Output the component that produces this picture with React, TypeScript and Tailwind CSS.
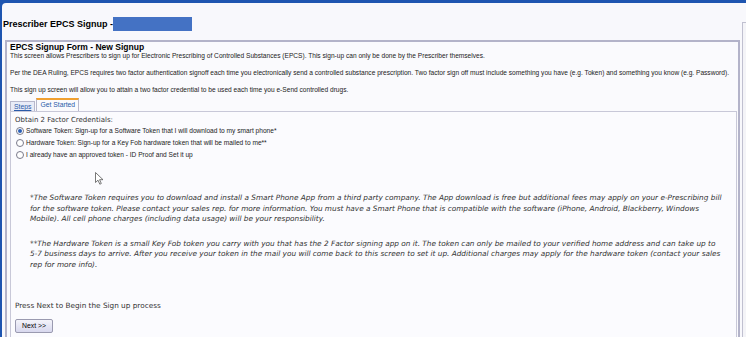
import React from "react";

const introLines: string[] = [
  "This screen allows Prescribers to sign up for Electronic Prescribing of Controlled Substances (EPCS). This sign-up can only be done by the Prescriber themselves.",
  "Per the DEA Ruling, EPCS requires two factor authentication signoff each time you electronically send a controlled substance prescription. Two factor sign off must include something you have (e.g. Token) and something you know (e.g. Password).",
  "This sign up screen will allow you to attain a two factor credential to be used each time you e-Send controlled drugs.",
];

const options: string[] = [
  "Software Token: Sign-up for a Software Token that I will download to my smart phone*",
  "Hardware Token: Sign-up for a Key Fob hardware token that will be mailed to me**",
  "I already have an approved token - ID Proof and Set it up",
];

// lines kept as in the screen so the wrap matches
const softwareNote: string[] = [
  "*The Software Token requires you to download and install a Smart Phone App from a third party company. The App download is free but additional fees may apply on your e-Prescribing bill",
  "for the software token. Please contact your sales rep. for more information. You must have a Smart Phone that is compatible with the software (iPhone, Android, Blackberry, Windows",
  "Mobile). All cell phone charges (including data usage) will be your responsibility.",
];

const hardwareNote: string[] = [
  "**The Hardware Token is a small Key Fob token you carry with you that has the 2 Factor signing app on it. The token can only be mailed to your verified home address and can take up to",
  "5-7 business days to arrive. After you receive your token in the mail you will come back to this screen to set it up. Additional charges may apply for the hardware token (contact your sales",
  "rep for more info).",
];

const Radio: React.FC<{ checked?: boolean }> = ({ checked }) => (
  <span className="w-[8px] h-[8px] rounded-full border border-[#7a7a8a] bg-white flex items-center justify-center shrink-0">
    {checked && <span className="w-[4px] h-[4px] rounded-full bg-[#2a5fb8]" />}
  </span>
);

const App: React.FC = () => {
  return (
    <div className="w-[746px] h-[337px] overflow-hidden bg-[#1e55b0] pt-[3px] pl-[2px] font-['Liberation_Sans',Arial,sans-serif]">
      <div className="relative h-full bg-[#f8f8fc] rounded-tl-[4px] flex">
        {/* main column */}
        <div className="flex-1 min-w-0">
          {/* page title */}
          <div className="flex items-center h-[14px] mt-[14px] pl-[1px]">
            <span className="text-[9px] font-bold text-black leading-none">
              Prescriber EPCS Signup -
            </span>
            <span className="w-[79px] h-[14px] bg-[#4472c4]" />
          </div>

          {/* form box */}
          <div className="mt-[9px] ml-[3px] w-[735px] h-[320px] border-2 border-b-0 border-[#b3b3c9] bg-[#fafafd] px-[3px]">
            <div className="text-[8.5px] font-bold text-black leading-[10px]">
              EPCS Signup Form - New Signup
            </div>
            <div className="flex flex-col gap-[9px] text-[6.6px] text-[#222] leading-[8px]">
              {introLines.map((line, i) => (
                <p key={i} className="whitespace-nowrap">
                  {line}
                </p>
              ))}
            </div>

            {/* tabs */}
            <div className="mt-[4px] flex items-end h-[13px]">
              <span className="h-[10px] px-[3px] border border-b-0 border-[#b8b8cc] bg-[#e9ecf7] text-[6.8px] text-[#2a5aa8] leading-[9px] underline">
                Steps
              </span>
              <span className="ml-[1px] h-[13px] px-[3px] border border-b-0 border-[#b8b8cc] border-t-2 border-t-[#f0a030] bg-[#fafafd] text-[6.8px] text-[#2a5aa8] leading-[10px]">
                Get Started
              </span>
            </div>

            {/* tab panel */}
            <div className="w-[727px] h-[240px] border border-[#c8c8d8] bg-[#fbfbfe] pl-[4px] pt-[3px] font-['DejaVu_Sans',Verdana,sans-serif]">
              <div className="text-[7px] text-[#333] leading-[10px]">
                Obtain 2 Factor Credentials:
              </div>
              <div className="mt-[1px] flex flex-col gap-[3px] pl-[1px]">
                {options.map((opt, i) => (
                  <label
                    key={i}
                    className="flex items-center gap-[2px] h-[9px] text-[6.6px] text-[#222] font-['Liberation_Sans',Arial,sans-serif]"
                  >
                    <Radio checked={i === 0} />
                    <span>{opt}</span>
                  </label>
                ))}
              </div>

              <div className="mt-[34px] pl-[15px] italic text-[7.34px] text-[#333] leading-[10.5px]">
                <div>
                  {softwareNote.map((line, i) => (
                    <p key={i} className="whitespace-nowrap">
                      {line}
                    </p>
                  ))}
                </div>
                <div className="mt-[14px]">
                  {hardwareNote.map((line, i) => (
                    <p key={i} className="whitespace-nowrap">
                      {line}
                    </p>
                  ))}
                </div>
              </div>

              <div className="mt-[31px] text-[7.3px] text-[#333] leading-[10px]">
                Press Next to Begin the Sign up process
              </div>
              <button className="mt-[7px] w-[38px] h-[14px] border border-[#9a9ab0] rounded-[2px] bg-gradient-to-b from-[#f4f4fa] to-[#d8d8ee] text-[6.8px] text-black leading-none font-['Liberation_Sans',Arial,sans-serif]">
                Next &gt;&gt;
              </button>
            </div>
          </div>
        </div>

        {/* right edge strip */}
        <div className="w-[4px] mt-[19px] border-l border-t border-[#c0c0d0] bg-[#f4f4f8]" />

        {/* mouse cursor */}
        <svg
          className="absolute left-[93px] top-[169px]"
          width="9"
          height="13"
          viewBox="0 0 9 13"
        >
          <path
            d="M0.5 0.5 L0.5 10.5 L3 8.2 L4.8 12.2 L6.3 11.5 L4.6 7.7 L8 7.7 Z"
            fill="#ffffff"
            stroke="#555"
            strokeWidth="0.8"
            strokeLinejoin="round"
          />
        </svg>
      </div>
    </div>
  );
};

export default App;
